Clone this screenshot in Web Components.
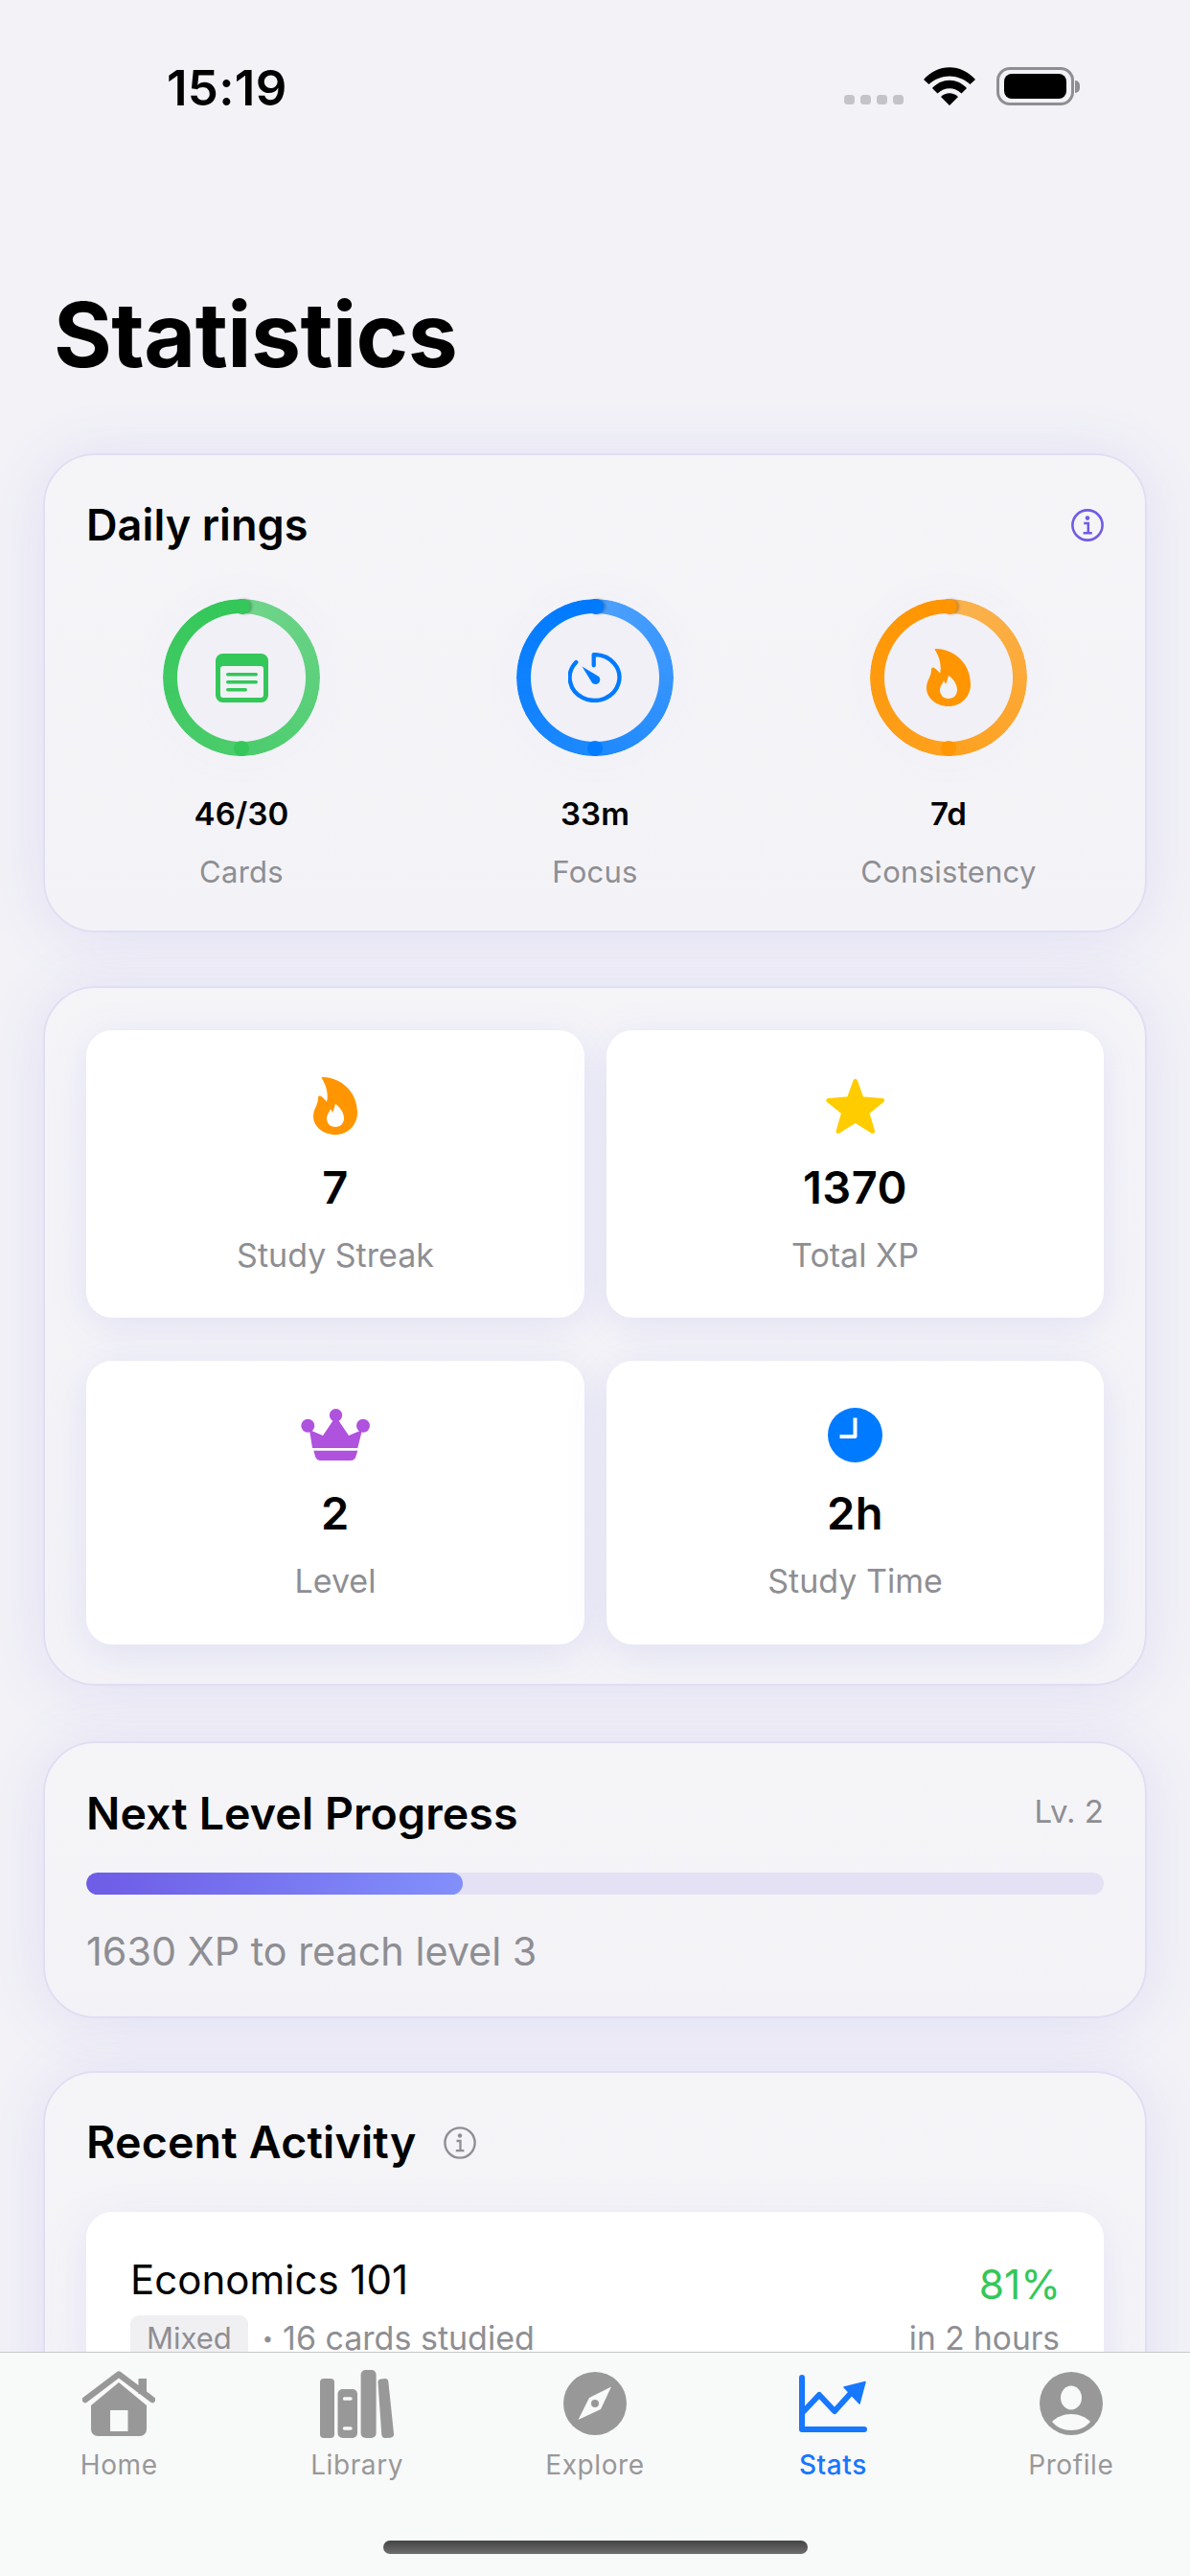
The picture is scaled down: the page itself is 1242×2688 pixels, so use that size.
<!DOCTYPE html>
<html lang="en"><head><meta charset="utf-8"><title>Statistics</title>
<style>
html,body{margin:0;padding:0;width:1242px;height:2688px;overflow:hidden;background:#f2f2f7}
body{font-family:Inter,"Noto Sans",sans-serif;color:#000}
</style></head><body>
<app-shell>
  <status-bar slot="status"></status-bar>
  <page-title slot="title">Statistics</page-title>

  <stat-card style="--pt:44px;--pb:43px">
    <card-head heading="Daily rings" style="--lh:58px;--fs:45px;--ls:.1px">
      <svg slot="end" width="34" height="34" viewBox="0 0 34 34" fill="none" stroke="#6e5ce6"><circle cx="17" cy="17" r="15.6" stroke-width="2.6"/><circle cx="17" cy="9.6" r="2.3" fill="#6e5ce6" stroke="none"/><path d="M13.2 15h4.6v10M12.6 25.2h9.2" stroke-width="2.5"/></svg>
    </card-head>
    <ring-row>
      <ring-item value="46/30" label="Cards" rgb="52,199,89">
        <svg width="55" height="51" viewBox="0 0 55 51"><rect width="55" height="51" rx="7.5" fill="#34c759"/><rect x="5" y="13" width="45" height="33" rx="3" fill="#f1f1f6"/><g fill="#34c759"><rect x="11" y="20" width="33" height="3.4" rx="1.7"/><rect x="11" y="28" width="33" height="3.4" rx="1.7"/><rect x="11" y="36" width="22" height="3.4" rx="1.7"/></g></svg>
      </ring-item>
      <ring-item value="33m" label="Focus" rgb="0,122,255">
        <svg width="56" height="52" viewBox="0 0 56 52" fill="none"><path d="M26.700 13.300V2.100H27.800A25.900 23.900 0 1 1 8.300 10" stroke="#007aff" stroke-width="4.300" stroke-linecap="round" stroke-linejoin="round"/><path d="M14.500 14.500 32 25A4.500 4.500 0 0 1 25 31.500Z" fill="#007aff"/></svg>
      </ring-item>
      <ring-item value="7d" label="Consistency" rgb="255,149,0">
        <flame-icon style="--hole:#f1f1f6"></flame-icon>
      </ring-item>
    </ring-row>
  </stat-card>

  <stat-card style="--pt:44px;--pb:40.5px">
    <tile-grid>
      <stat-tile value="7" label="Study Streak" style="--top:49px;--gap1:33px;--h:300px"><flame-icon style="--hole:#fff"></flame-icon></stat-tile>
      <stat-tile value="1370" label="Total XP" style="--top:49px;--gap1:33px;--h:300px">
        <svg width="62" height="58" viewBox="0 0 62 58"><path d="M30.700 3 37.400 21.500 58.800 23.300 43 36 48.800 55.500 30.700 44.300 12.800 55.500 18.500 36 2.600 23.300 24 21.500Z" fill="#ffcc00" stroke="#ffcc00" stroke-width="4.500" stroke-linejoin="round"/></svg>
      </stat-tile>
      <stat-tile value="2" label="Level" style="--top:47px;--gap1:30px;--h:296px">
        <svg width="72" height="54" viewBox="0 0 72 54" fill="#af52de"><circle cx="36.500" cy="6.700" r="6.700"/><circle cx="7.300" cy="17.700" r="7"/><circle cx="65" cy="17.700" r="7"/><path d="M36.500 8 50 28 64 22 59.300 41H12L9 22 23 28Z"/><path d="M13.300 43.800H59.300L57.500 49.500A6 6 0 0 1 52 54H20.500A6 6 0 0 1 15 49.500Z"/></svg>
      </stat-tile>
      <stat-tile value="2h" label="Study Time" style="--top:47px;--gap1:30px;--h:296px">
        <svg width="57" height="57" viewBox="0 0 57 57"><circle cx="28.500" cy="28.500" r="28.500" fill="#007aff"/><path d="M28.500 10.500V30H12.500" fill="none" stroke="#fff" stroke-width="4" stroke-linejoin="round"/></svg>
      </stat-tile>
    </tile-grid>
  </stat-card>

  <stat-card style="--pt:43px;--pb:42.500px;--mt:2.500px">
    <card-head heading="Next Level Progress" style="--lh:60px;--fs:46.500px;--fw:600;--ls:.1px">
      <span slot="end" style="font-size:33px;color:#8e8e93;line-height:60px;display:block;position:relative;top:-2px">Lv. 2</span>
    </card-head>
    <level-bar percent="37" caption="1630 XP to reach level 3" style="--tm:32px"></level-bar>
  </stat-card>

  <stat-card style="--pt:43px;--pb:44px;--mt:-.5px">
    <card-head heading="Recent Activity" style="--lh:59px;--fs:46.500px;--fw:600;--ls:.2px;--gap:29px">
      <svg slot="after" width="34" height="36" viewBox="0 0 34 36" fill="none" stroke="#8e8e93"><circle cx="17" cy="18" r="15.600" stroke-width="2.400"/><circle cx="17" cy="10.500" r="2.200" fill="#8e8e93" stroke="none"/><path d="M13.500 16h4v10M12.800 26.200h8.600" stroke-width="2.300"/></svg>
    </card-head>
    <activity-row name="Economics 101" pill="Mixed" detail="16 cards studied" score="81%" when="in 2 hours"></activity-row>
  </stat-card>

  <tab-bar slot="tabs">
    <tab-item label="Home">
      <svg width="76" height="68" viewBox="0 0 76 68"><rect x="58.500" y="8" width="8.500" height="16" fill="#989898"/><path d="M3 30 38 3.500 73 30" fill="none" stroke="#989898" stroke-width="6.500" stroke-linecap="round" stroke-linejoin="round"/><path fill-rule="evenodd" fill="#989898" d="M38 12 67 36V61a7 7 0 0 1-7 7H16a7 7 0 0 1-7-7V36ZM29 41V63H47.500V41Z"/></svg>
    </tab-item>
    <tab-item label="Library">
      <svg width="77" height="71" viewBox="0 0 77 71" fill="#989898"><rect y="9" width="15" height="62" rx="4"/><path fill-rule="evenodd" d="M23.500 20H34a5 5 0 0 1 5 5V66a5 5 0 0 1-5 5H23.500a5 5 0 0 1-5-5V25a5 5 0 0 1 5-5ZM25.500 28.300a1.700 1.700 0 0 0 0 3.400H32a1.700 1.700 0 0 0 0-3.400ZM25.500 59.300a1.700 1.700 0 0 0 0 3.400H32a1.700 1.700 0 0 0 0-3.400Z"/><rect x="42.600" width="16" height="71" rx="5"/><path d="M60.500 13a3.500 3.500 0 0 1 3.300-3.600l3.800-.3a3.500 3.500 0 0 1 3.700 3L77 66.500a4 4 0 0 1-3.500 4.300l-5 .2a4 4 0 0 1-4.200-3.600Z"/></svg>
    </tab-item>
    <tab-item label="Explore">
      <svg width="66" height="66" viewBox="0 0 66 66"><circle cx="33" cy="33" r="33" fill="#989898"/><path fill="#f8f9f9" fill-rule="evenodd" d="M50 15.500 39 39 15.500 50 27 27ZM33 29a4 4 0 1 0 0 8 4 4 0 0 0 0-8Z"/></svg>
    </tab-item>
    <tab-item label="Stats" active>
      <svg width="71" height="60" viewBox="0 0 71 60" fill="none" stroke="#1677ff"><path d="M3 3V57H68" stroke-width="6" stroke-linecap="round" stroke-linejoin="round"/><path d="M4 39 21 21 37 38 56 17" stroke-width="6" stroke-linejoin="round"/><path d="M47 13 69 7.500 63 30Z" fill="#1677ff" stroke="#1677ff" stroke-width="1.500" stroke-linejoin="round"/></svg>
    </tab-item>
    <tab-item label="Profile">
      <svg width="66" height="66" viewBox="0 0 66 66"><circle cx="33" cy="33" r="33" fill="#989898"/><ellipse cx="33" cy="27" rx="11" ry="12.500" fill="#f8f9f9"/><path fill="#f8f9f9" d="M13 52C18 47 25 44 33 44S48 47 53 52C48 58 41 61 33 61S18 58 13 52Z"/></svg>
    </tab-item>
  </tab-bar>
</app-shell>

<script>
function def(name, css, html){
  customElements.define(name, class extends HTMLElement{
    constructor(){super();const r=this.attachShadow({mode:'open'});
      const a=n=>(this.getAttribute(n)||'');
      r.innerHTML='<style>'+css+'</style>'+(typeof html==='function'?html(a,this):html);}
  });
}
def('app-shell',
 `:host{display:flex;flex-direction:column;width:1242px;height:2688px;overflow:hidden;background:#f2f2f7}
  main{flex:1;min-height:0;overflow:hidden;display:flex;flex-direction:column;gap:56px;padding:0 45px}`,
 `<slot name="status"></slot><main><slot name="title"></slot><slot></slot></main><slot name="tabs"></slot>`);

def('status-bar',
 `:host{display:flex;justify-content:space-between;align-items:flex-start;height:160px;padding:0 115px 0 174px;flex:none;box-sizing:border-box}
  .t{font:600 51px/51px Inter,sans-serif;margin-top:66px;letter-spacing:.3px}
  .r{display:flex;align-items:flex-end;margin-top:70px;height:40px}
  .dots{display:flex;gap:6px;margin-bottom:1px;margin-right:21px}
  .dots i{width:11px;height:10px;border-radius:3.5px;background:#c4c4c8;display:block}
  .bat{margin-left:22px;display:flex;align-items:center}
  .b{width:81px;height:40px;box-sizing:border-box;border:3px solid #8f8f93;border-radius:14px;padding:4px 5px}
  .b i{display:block;height:100%;background:#000;border-radius:8px}
  .n{width:5px;height:13px;background:#8f8f93;border-radius:0 5px 5px 0;margin-left:1px}`,
 `<div class="t">15:19</div><div class="r"><div class="dots"><i></i><i></i><i></i><i></i></div>
  <svg width="54" height="40" viewBox="0 0 54 40"><path d="M0 13C15-4 39-4 54 13L48.500 18C36 6.500 18 6.500 5.500 18ZM9 22C19 11 35 11 45 22L39.500 27.500C32 20.500 22 20.500 14.500 27.500ZM18 31C23 26 31 26 36 31L27 40Z"/></svg>
  <div class="bat"><div class="b"><i></i></div><div class="n"></div></div></div>`);

def('page-title',
 `:host{display:block;font:700 93px/100px Inter,sans-serif;letter-spacing:-.55px;padding:0 0 0 11px;margin:139px 0 8px;height:110px;flex:none;color:#000}`,
 `<slot></slot>`);

def('stat-card',
 `:host{display:block;flex:none;box-sizing:border-box;background:linear-gradient(#f5f5f8,#f3f3f7);border:2px solid #e0def3;border-radius:54px;margin-top:var(--mt,0);
   padding:var(--pt,44px) 43px var(--pb,44px);box-shadow:0 4px 64px rgba(104,92,224,.12)}`,
 `<slot></slot>`);

def('card-head',
 `:host{display:flex;align-items:center;justify-content:space-between}
  .l{display:flex;align-items:center;gap:var(--gap,26px)}
  h2{margin:0;font:var(--fw,600) var(--fs,45px)/var(--lh,56px) Inter,sans-serif;letter-spacing:var(--ls,0);color:#000}
  ::slotted(svg){display:block}`,
 (a)=>`<div class="l"><h2>${a('heading')}</h2><slot name="after"></slot></div><slot name="end"></slot>`);

def('ring-row',
 `:host{display:grid;grid-template-columns:repeat(3,369px);justify-content:center;margin:48px -24px 0}`,
 `<slot></slot>`);

def('ring-item',
 `:host{display:flex;flex-direction:column;align-items:center}
  .ring{position:relative;width:164px;height:164px;border-radius:50%;display:flex;align-items:center;justify-content:center;background:#f0f0f6;box-shadow:0 0 50px rgba(104,92,224,.035)}
  .band{position:absolute;inset:0;border-radius:50%;
    background:conic-gradient(rgba(var(--c),.68),rgba(var(--c),.88) 180deg,rgb(var(--c)) 345deg);
    -webkit-mask:radial-gradient(circle closest-side,transparent 66.5px,#000 67.5px);mask:radial-gradient(circle closest-side,transparent 66.5px,#000 67.5px)}
  .end,.start{position:absolute;width:16px;height:16px;border-radius:50%;background:rgb(var(--c));left:74px}
  .end{top:0;left:75px;box-shadow:2px 0 3px rgba(0,0,0,.25)}
  .start{bottom:0;opacity:.9}
  .icon{position:relative;display:flex}
  .v{font:600 33px/40px Inter,sans-serif;margin-top:40px;color:#000;letter-spacing:.1px}
  .k{font:400 31px/36px Inter,sans-serif;color:#8e8e93;margin-top:23px;letter-spacing:.25px}`,
 (a,el)=>{el.style.setProperty('--c',a('rgb'));return `<div class="ring"><div class="band"></div><div class="end"></div><div class="start"></div><div class="icon"><slot></slot></div></div><div class="v">${a('value')}</div><div class="k">${a('label')}</div>`});

def('flame-icon',
 `:host{display:block;width:46px;height:60px}svg{display:block}`,
 `<svg width="46" height="60" viewBox="0 0 46 60"><path fill="#ff9500" d="M9 1.500C8 .3 9 0 11 0 30 1 46 16 46 37 46 50 36 60 23 60 10 60 0 51 0 41 0 33 5 29 5 22 5 20 6 19 8 20 10 21 13 24 14 26 16 19 14 9 9 1.500Z"/><path style="fill:var(--hole)" d="M23 52C17.500 52 14 48 14 43 14 39 17 36 18 33L20 37C21.500 34 22 31 23 28 28 31 32 37 32 43 32 48 28.500 52 23 52Z"/></svg>`);

def('tile-grid',
 `:host{display:grid;grid-template-columns:520px 519px;column-gap:23px;row-gap:45px}`,
 `<slot></slot>`);

def('stat-tile',
 `:host{display:flex;flex-direction:column;align-items:center;box-sizing:border-box;height:var(--h,300px);padding-top:var(--top,49px);background:#fff;border-radius:27px;box-shadow:0 8px 44px rgba(104,92,224,.13)}
  .i{height:60px;display:flex;align-items:center;justify-content:center}
  .v{font:600 47px/44px Inter,sans-serif;margin-top:var(--gap1,33px);color:#000;letter-spacing:.5px}
  .k{font:400 34px/40px Inter,sans-serif;color:#8e8e93;margin-top:29px}`,
 (a)=>`<div class="i"><slot></slot></div><div class="v">${a('value')}</div><div class="k">${a('label')}</div>`);

def('level-bar',
 `:host{display:block;margin-top:var(--tm,31px)}
  .t{height:23px;border-radius:11.5px;background:#e3e1f3;overflow:hidden}
  .f{height:100%;background:linear-gradient(90deg,#6e5ce6,#8290fb);border-radius:11.5px}
  .c{font:400 41.300px/50px Inter,sans-serif;color:#8e8e93;margin-top:34px}`,
 (a)=>`<div class="t"><div class="f" style="width:${a('percent')}%"></div></div><div class="c">${a('caption')}</div>`);

def('activity-row',
 `:host{display:flex;justify-content:space-between;margin-top:43px;padding:47px 46px 47px 46px;background:#fff;border-radius:27px;box-shadow:0 8px 44px rgba(104,92,224,.10)}
  .n{font:400 42px/48px Inter,sans-serif;color:#000}
  .m{display:flex;align-items:center;margin-top:13px;font:400 34px/40px Inter,sans-serif;color:#8e8e93}
  .p{background:#f0f0f2;border-radius:9px;padding:0 17px;font-size:31px;height:48px;line-height:48px;margin-right:15px}
  .dot{font-size:20px;margin-right:10px}
  .r{display:flex;flex-direction:column;align-items:flex-end}
  .s{font:400 42.500px/48px Inter,sans-serif;color:#34c759;margin:5px -1px 0 0}
  .w{font:400 33.500px/40px Inter,sans-serif;color:#8e8e93;margin-top:12px}`,
 (a)=>`<div><div class="n">${a('name')}</div><div class="m"><span class="p">${a('pill')}</span><span class="dot">•</span><span>${a('detail')}</span></div></div><div class="r"><div class="s">${a('score')}</div><div class="w">${a('when')}</div></div>`);

def('tab-bar',
 `:host{display:block;flex:none;height:234px;box-sizing:border-box;position:relative;background:#f8f9f9;border-top:1.5px solid #c6c6c8}
  .g{display:grid;grid-template-columns:repeat(5,1fr)}
  .h{position:absolute;left:400px;top:196px;width:443px;height:14px;border-radius:7px;background:linear-gradient(#444,#6e6e6e)}`,
 `<div class="g"><slot></slot></div><div class="h"></div>`);

def('tab-item',
 `:host{display:flex;flex-direction:column;align-items:center}
  .i{height:72px;margin-top:17px;display:flex;align-items:center;justify-content:center}
  .l{font:400 28px/32px Inter,sans-serif;color:#989898;margin-top:12px;letter-spacing:.6px}
  :host([active]) .l{color:#1677ff;font-weight:500}`,
 (a)=>`<div class="i"><slot></slot></div><div class="l">${a('label')}</div>`);
</script>
</body></html>
